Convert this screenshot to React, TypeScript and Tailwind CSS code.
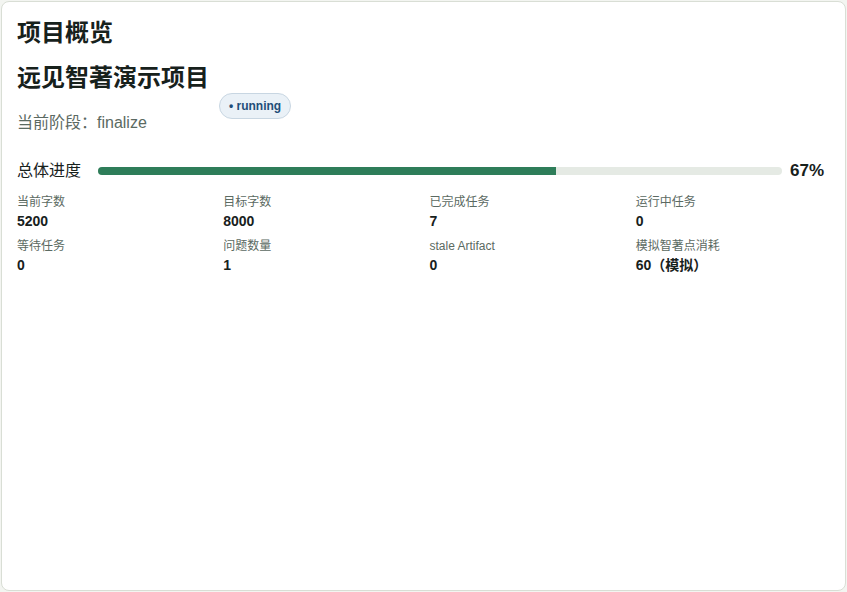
import React from "react"

type Stat = {
  label: string
  value: string
}

const stats: Stat[] = [
  { label: "当前字数", value: "5200" },
  { label: "目标字数", value: "8000" },
  { label: "已完成任务", value: "7" },
  { label: "运行中任务", value: "0" },
  { label: "等待任务", value: "0" },
  { label: "问题数量", value: "1" },
  { label: "stale Artifact", value: "0" },
  { label: "模拟智著点消耗", value: "60（模拟）" },
]

export default function App() {
  const progress = 67

  return (
    <div className="min-h-[592px] bg-[#f3f5f1] p-px font-['Liberation_Sans','Noto_Sans_CJK_SC',sans-serif] text-[#17211c]">
      <div className="h-[590px] rounded-lg border border-[#d9ded5] bg-white px-[15px] py-4">
        <h1 className="text-2xl font-bold leading-[30px]">项目概览</h1>

        <div className="mt-[15px] flex gap-[10px]">
          <div>
            <h2 className="text-2xl font-bold leading-[30px]">远见智著演示项目</h2>
            <p className="mt-[18px] text-base leading-6 text-[#5b6a62]">当前阶段：finalize</p>
          </div>
          <span className="mt-[30px] self-start rounded-full border border-[#c8d6e2] bg-[#eaf1f7] px-[9px] text-xs font-bold leading-6 text-[#1f4e79]">
            • running
          </span>
        </div>

        <div className="mt-6 flex h-6 items-center">
          <span className="text-base leading-6">总体进度</span>
          <div className="ml-[17px] h-2 flex-1 overflow-hidden rounded-full bg-[#e5eae4]">
            <div className="h-full bg-[#2e7d59]" style={{ width: `${progress}%` }} />
          </div>
          <span className="ml-2 w-10 text-[17px] font-bold leading-6">{progress}%</span>
        </div>

        <div className="mt-[11px] grid grid-cols-4 gap-x-3 gap-y-2">
          {stats.map((s) => (
            <div key={s.label}>
              <div className="text-xs leading-4 text-[#5b6a62]">{s.label}</div>
              <div className="mt-0.5 text-sm font-bold leading-[18px]">{s.value}</div>
            </div>
          ))}
        </div>
      </div>
    </div>
  )
}
